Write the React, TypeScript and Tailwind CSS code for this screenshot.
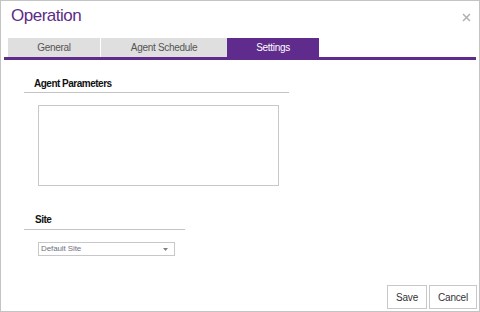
export default function App() {
    return (
        <div
            className="w-[480px] h-[312px] border border-[#c4c4c4] bg-white flex flex-col"
            style={{ fontFamily: '"Liberation Sans", Arial, sans-serif' }}
        >
            {/* Header */}
            <div className="h-[37px] flex items-start justify-between pl-[10px] pr-[8px] pt-[4px]">
                <h1 className="text-[17px] leading-[22px] tracking-[-0.5px] text-[#5b2d86]">Operation</h1>
                <svg width="9" height="9" viewBox="0 0 9 9" className="mt-[8px]">
                    <path d="M1 1L8 8M8 1L1 8" stroke="#b0b0b0" strokeWidth="1.5" />
                </svg>
            </div>

            {/* Tabs */}
            <div className="px-[3px]">
                <div className="flex h-[19px] pl-[4px] text-[10px] leading-[19px] tracking-[-0.3px] text-[#555]">
                    <div className="w-[92px] bg-[#dfdfdf] text-center">General</div>
                    <div className="w-[126px] ml-[1px] bg-[#dfdfdf] text-center">Agent Schedule</div>
                    <div className="w-[92px] bg-[#5f2b8c] text-white text-center">Settings</div>
                </div>
                <div className="h-[3px] bg-[#5f2b8c]" />
            </div>

            {/* Agent Parameters */}
            <div className="ml-[23px] mt-[17px] w-[265px]">
                <div className="border-b border-[#c4c4c4] pl-[10px] pb-[2px] text-[10px] leading-[13px] font-bold tracking-[-0.5px] text-[#111]">
                    Agent Parameters
                </div>
                <textarea className="block ml-[14px] mt-[12px] w-[241px] h-[81px] border border-[#c8c8c8] resize-none outline-none" />
            </div>

            {/* Site */}
            <div className="ml-[23px] mt-[27px] w-[161px]">
                <div className="border-b border-[#c4c4c4] pl-[11px] pb-[3px] text-[10px] leading-[13px] font-bold tracking-[-0.5px] text-[#111]">
                    Site
                </div>
                <div className="ml-[14px] mt-[12px] w-[137px] h-[14px] border border-[#c8c8c8] flex items-center justify-between pl-[2px] pr-[6px]">
                    <span className="text-[8px] leading-[12px] tracking-[-0.1px] text-[#72737f]">Default Site</span>
                    <svg width="5" height="3" viewBox="0 0 5 3">
                        <path d="M0 0H5L2.5 3Z" fill="#808080" />
                    </svg>
                </div>
            </div>

            <div className="flex-1" />

            {/* Footer */}
            <div className="flex justify-end gap-[2px] pr-[2px] pb-[2px]">
                <button className="w-[40px] h-[24px] border border-[#c8c8c8] bg-white text-[10px] tracking-[-0.2px] text-[#333]">
                    Save
                </button>
                <button className="w-[48px] h-[24px] border border-[#c8c8c8] bg-white text-[10px] tracking-[-0.2px] text-[#333]">
                    Cancel
                </button>
            </div>
        </div>
    );
}
